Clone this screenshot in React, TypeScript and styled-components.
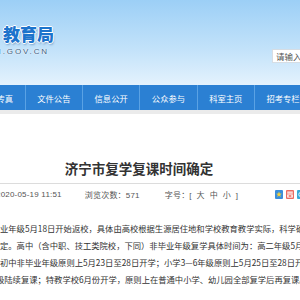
import React from "react";
import styled, { createGlobalStyle } from "styled-components";

const GlobalStyle = createGlobalStyle`
  html, body {
    margin: 0;
    padding: 0;
    background: #fff;
    overflow: hidden;
  }
  body {
    font-family: "Liberation Sans", "Noto Sans CJK SC", sans-serif;
  }
`;

const Page = styled.div`
  width: 300px;
  height: 300px;
  overflow: hidden;
`;

const Header = styled.div`
  height: 85px;
  display: flex;
  justify-content: space-between;
  align-items: flex-start;
  background: linear-gradient(180deg, #9ccff6 0%, #c4e3fa 60%, #e4f2fd 100%);
`;

const LogoBlock = styled.div`
  display: flex;
  flex-direction: column;
  padding-top: 22px;
  padding-left: 3px;
`;

const LogoTitle = styled.div`
  font-family: "Noto Sans CJK SC", sans-serif;
  font-weight: 900;
  font-size: 17px;
  line-height: 24px;
  color: #1d74cc;
  white-space: nowrap;
  text-shadow: 1px 0 0 #fff, -1px 0 0 #fff, 0 1px 0 #fff, 0 -1px 0 #fff,
    1px 2px 2px rgba(20, 70, 130, 0.35);
`;

const LogoDomain = styled.div`
  margin-left: -8px;
  margin-top: 1px;
  font-family: "Liberation Sans", sans-serif;
  font-size: 8px;
  line-height: 10px;
  letter-spacing: 1.9px;
  color: #3d5d80;
  white-space: nowrap;
  text-shadow: 0 0 2px #fff, 0 0 1px #fff;
`;

const SearchBox = styled.div`
  margin-top: 49px;
  margin-right: -32px;
  width: 60px;
  height: 14px;
  box-sizing: border-box;
  border: 1px solid #d6dde4;
  background: #fff;
  padding-left: 3px;
  font-family: "Noto Sans CJK SC", sans-serif;
  font-size: 8.5px;
  line-height: 12px;
  color: #555;
  white-space: nowrap;
  overflow: hidden;
`;

const Nav = styled.div`
  display: flex;
  height: 25px;
  background: #2b80d3;
  overflow: hidden;
`;

const NavTrack = styled.div`
  display: flex;
  margin-left: -31.6px;
`;

const NavItem = styled.div`
  flex: 0 0 57.3px;
  box-sizing: border-box;
  border-right: 1px solid #5aa2e4;
  display: flex;
  align-items: center;
  justify-content: center;
  font-family: "Noto Sans CJK SC", sans-serif;
  font-size: 8.3px;
  color: #fff;
  white-space: nowrap;
`;

const GreyStrip = styled.div`
  height: 4px;
  background: #ebebeb;
`;

const Main = styled.div`
  width: 358px;
  margin-left: -40px;
`;

const Title = styled.h1`
  margin: 44px 0 0;
  text-align: center;
  font-family: "Noto Sans CJK SC", sans-serif;
  font-weight: 700;
  font-size: 13.5px;
  line-height: 20px;
  color: #333;
`;

const Divider = styled.div`
  margin-top: 5px;
  height: 1px;
  background: #dcdcdc;
`;

const Meta = styled.div`
  display: flex;
  align-items: center;
  margin-top: 4px;
  height: 12px;
  padding-left: 36px;
  padding-right: 13px;
  font-size: 8px;
  color: #555;
  white-space: nowrap;
`;

const MetaItem = styled.span<{ $gap: number }>`
  margin-right: ${(p) => p.$gap}px;
  letter-spacing: 0.2px;
`;

const Icons = styled.div`
  margin-left: auto;
  display: flex;
  gap: 3px;
`;

const Body = styled.div`
  margin-top: 20px;
  padding-left: 40px;
  font-family: "Noto Sans CJK SC", sans-serif;
  font-size: 8.3px;
  line-height: 17px;
  color: #333;
`;

const Line = styled.div<{ $shift: number }>`
  white-space: nowrap;
  margin-left: ${(p) => p.$shift}px;
`;

const navItems = ["局长传真", "文件公告", "信息公开", "公众参与", "科室主页", "招考专栏"];

const lines: { text: string; shift: number }[] = [
  { text: "业年级5月18日开始返校，具体由高校根据生源居住地和学校教育教学实际，科学确定返校时间", shift: 0 },
  { text: "定。高中（含中职、技工类院校，下同）非毕业年级复学具体时间为：高二年级5月", shift: 0 },
  { text: "初中非毕业年级原则上5月23日至28日开学；小学3—6年级原则上5月25日至28日开学", shift: 0 },
  { text: "级陆续复课；特教学校6月份开学，原则上在普通中小学、幼儿园全部复学后再复课。", shift: -4 },
];

const StarIcon = () => (
  <svg width="8" height="9" viewBox="0 0 8 9">
    <rect x="0" y="0" width="8" height="9" rx="1" fill="#3b8edb" />
    <polygon
      points="4,1.6 4.8,3.6 6.8,3.7 5.2,5 5.8,7 4,5.8 2.2,7 2.8,5 1.2,3.7 3.2,3.6"
      fill="#f5d23a"
    />
  </svg>
);

const PrintIcon = () => (
  <svg width="8" height="9" viewBox="0 0 8 9">
    <rect x="0" y="0" width="8" height="9" rx="1" fill="#ec6b62" />
    <rect x="1.2" y="1.4" width="5.6" height="2.4" fill="#fbd6d2" />
    <rect x="1.2" y="4.4" width="5.6" height="3.2" fill="#fff" />
    <rect x="2.6" y="5.2" width="2.8" height="1.6" fill="#ec6b62" />
  </svg>
);

const ShareIcon = () => (
  <svg width="8" height="9" viewBox="0 0 8 9">
    <rect x="0" y="0" width="8" height="9" rx="1" fill="#38a9d7" />
    <circle cx="4" cy="4.5" r="2.2" fill="none" stroke="#e6f6fc" strokeWidth="1" />
  </svg>
);

export default function App() {
  return (
    <Page>
      <GlobalStyle />
      <Header>
        <LogoBlock>
          <LogoTitle>教育局</LogoTitle>
          <LogoDomain>N.GOV.CN</LogoDomain>
        </LogoBlock>
        <SearchBox>请输入关键字</SearchBox>
      </Header>
      <Nav>
        <NavTrack>
          {navItems.map((item) => (
            <NavItem key={item}>{item}</NavItem>
          ))}
        </NavTrack>
      </Nav>
      <GreyStrip />
      <Main>
        <Title>济宁市复学复课时间确定</Title>
        <Divider />
        <Meta>
          <MetaItem $gap={23}>2020-05-19 11:51</MetaItem>
          <MetaItem $gap={25}>浏览次数：571</MetaItem>
          <MetaItem $gap={0}>字号：[&nbsp; 大 &nbsp;中 &nbsp;小&nbsp; ]</MetaItem>
          <Icons>
            <StarIcon />
            <PrintIcon />
            <ShareIcon />
          </Icons>
        </Meta>
        <Body>
          {lines.map((l) => (
            <Line key={l.text} $shift={l.shift}>
              {l.text}
            </Line>
          ))}
        </Body>
      </Main>
    </Page>
  );
}
